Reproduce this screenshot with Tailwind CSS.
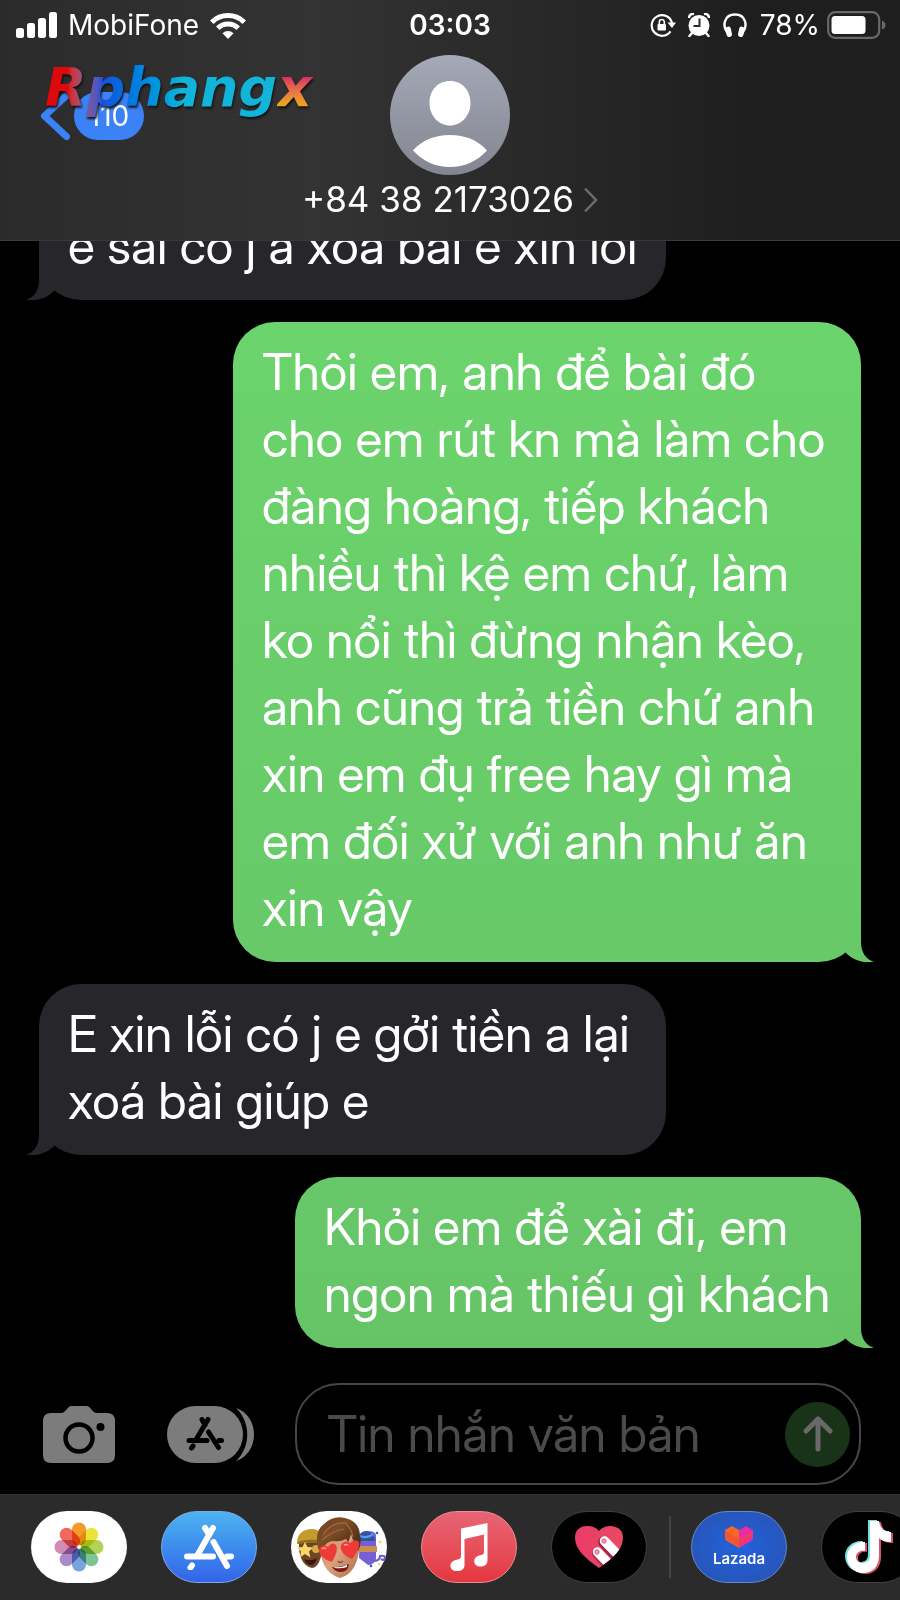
<!DOCTYPE html>
<html lang="vi">
<head>
<meta charset="utf-8">
<meta name="viewport" content="width=device-width, initial-scale=1">
<title>Tin nhắn</title>
<script src="https://cdn.jsdelivr.net/npm/@tailwindcss/browser@4"></script>
</head>
<body class="bg-black text-white font-['Inter','Noto_Sans',sans-serif] min-h-screen flex flex-col overflow-x-hidden">

<header class="relative z-10 bg-linear-to-r from-[#2b2b2c] via-[#333334] via-35% to-[#1e1e1e] to-85% border-b border-[#3a3a3b]">
  <!-- Status bar -->
  <div class="grid grid-cols-[1fr_auto_1fr] items-center h-[50px] px-[14px] text-[28px] leading-8">
    <div class="flex items-center gap-[11px] pl-[2px]">
      <svg class="w-[41px] h-[26px]" viewBox="0 0 41 26" fill="#fff" aria-label="Tín hiệu"><rect x="0" y="16" width="8" height="10" rx="2.5"/><rect x="11" y="11" width="8" height="15" rx="2.5"/><rect x="22" y="6" width="8" height="20" rx="2.5"/><rect x="33" y="0" width="8" height="26" rx="2.5"/></svg>
      <span>MobiFone</span>
      <svg class="w-9 h-[27px]" viewBox="0 0 36 27" fill="none" stroke="#fff" stroke-width="5" aria-label="Wi-Fi"><path d="M1.8 10.2a23 23 0 0 1 32.4 0"/><path d="M7.8 16.2a14.500 14.500 0 0 1 20.400 0"/><path d="M18 27l-5.500-5.700a8 8 0 0 1 11 0z" fill="#fff" stroke="none"/></svg>
    </div>
    <time class="font-semibold">03:03</time>
    <div class="flex items-center justify-end">
      <svg class="w-[26px] h-6 mr-3" viewBox="0 0 26 24" fill="none" stroke="#fff" stroke-width="2.200"><path d="M20.500 18.300A10.300 10.300 0 1 1 22 10"/><path d="M17.500 9.500h8.500l-4 5.500z" fill="#fff" stroke="none"/><rect x="7.500" y="11" width="8.500" height="6.500" rx="1" fill="#fff" stroke="none"/><path d="M9.300 11.500V9a2.500 2.500 0 0 1 5 0v2.500" stroke-width="1.600"/></svg>
      <svg class="w-[22px] h-6 mr-[13px]" viewBox="0 0 22 24"><circle cx="11" cy="12.500" r="10.500" fill="#fff"/><path d="M1 5a4 4 0 0 1 5-4M21 5a4 4 0 0 0-5-4" fill="none" stroke="#fff" stroke-width="2.500"/><path d="M4 20l-2.500 3M18 20l2.500 3" stroke="#fff" stroke-width="2.500" stroke-linecap="round"/><path d="M11.500 5.500v7.500H5.500" fill="none" stroke="#2b2b2b" stroke-width="2"/></svg>
      <svg class="w-6 h-6 mr-[13px]" viewBox="0 0 24 24"><path d="M4.500 20C-1 13 1 1.500 12 1.500S25 13 19.500 20" fill="none" stroke="#fff" stroke-width="2.400"/><rect x="3" y="13.500" width="5.500" height="10.500" rx="2.700" fill="#fff" transform="rotate(-12 6 19)"/><rect x="15.500" y="13.500" width="5.500" height="10.500" rx="2.700" fill="#fff" transform="rotate(12 18 19)"/></svg>
      <span class="mr-[7px]">78%</span>
      <svg class="w-[59px] h-7" viewBox="0 0 59 28"><rect x="1.200" y="1.200" width="51" height="25.600" rx="7" fill="none" stroke="#69696a" stroke-width="2.200"/><rect x="4.500" y="5" width="34" height="18" rx="3.500" fill="#fff"/><path d="M55 9.500q3.500 1.500 3.500 4.500t-3.500 4.500z" fill="#69696a"/></svg>
    </div>
  </div>
  <!-- Contact bar -->
  <div class="grid grid-cols-[1fr_auto_1fr] items-start pt-[5px] pb-[21px]">
    <button type="button" aria-label="Quay lại" class="flex items-center gap-[4px] pl-10 pt-9 w-fit">
      <svg class="w-[30px] h-[50px]" viewBox="0 0 30 50"><path d="M26.500 4.500L4.500 25l22 20.500" fill="none" stroke="#3b82f6" stroke-width="7" stroke-linecap="round" stroke-linejoin="round"/></svg>
      <span class="bg-[#3b82f6] rounded-full w-[70px] h-12 flex items-center justify-center text-[28px]">110</span>
    </button>
    <div class="flex flex-col items-center gap-[5px]">
      <svg class="w-[120px] h-[120px]" viewBox="0 0 120 120"><defs><linearGradient id="av" x1="0" y1="0" x2="0" y2="1"><stop offset="0" stop-color="#a5a9b8"/><stop offset="1" stop-color="#83868f"/></linearGradient></defs><circle cx="60" cy="60" r="60" fill="url(#av)"/><path d="M60 26c12 0 20.500 9 20.500 22S71 70.500 60 70.500 39.500 61 39.500 48 48 26 60 26zM23 95.500C32 85 45 80 60 80s28 5 37 15.500C87 106.500 74 112 60 112s-27-5.500-37-16.500z" fill="#fff"/></svg>
      <a href="tel:+84382173026" class="flex items-center gap-[10px] text-[35px] leading-[39px] whitespace-nowrap"><span>+84 38 2173026</span><svg class="w-[14px] h-[26px]" viewBox="0 0 14 26" fill="none" stroke="#6d6d6f" stroke-width="2.500"><path d="M1 1.500L12 13 1 24.500"/></svg></a>
    </div>
  </div>
  <!-- Watermark laid over the back button -->
  <div class="absolute left-[45px] top-[56px] font-['DejaVu_Sans',sans-serif] italic font-bold text-[54px] leading-[64px] drop-shadow-[1px_2px_1px_#111] flex pointer-events-none">
    <span class="bg-clip-text text-transparent bg-linear-to-r from-[#dc0a0c] from-10% via-[#1650de] via-25% to-[#12b5da] to-60%">Rphang</span><span class="bg-clip-text text-transparent bg-linear-to-b from-[#d81b60] from-30% to-[#eda315] to-75% pr-1">x</span>
  </div>
</header>

<main class="flex-1 flex flex-col gap-[22px] overflow-hidden px-[39px] font-['Inter_Display','Inter',sans-serif] text-[50px] leading-[67px] whitespace-nowrap">
  <div class="relative self-start -mt-[45px] bg-[#27262b] rounded-[42px] px-[29px] pt-[17px] pb-[20px] w-[627px]">
    <p>e sai có j a xoá bài e xin lỗi</p>
    <svg class="absolute -left-[13px] bottom-0 w-[54px] h-[44px]" viewBox="0 0 54 44" fill="#27262b"><path d="M13 0V24C13 34 8 42 0 43.500 10 46 21 42 28 35L54 12z"/></svg>
  </div>
  <div class="relative self-end bg-linear-to-b from-[#6cd46c] to-[#67c968] rounded-[42px] px-[29px] pt-[17px] pb-[20px] w-[628px]">
    <p>Thôi em, anh để bài đó<br>cho em rút kn mà làm cho<br>đàng hoàng, tiếp khách<br>nhiều thì kệ em chứ, làm<br>ko nổi thì đừng nhận kèo,<br>anh cũng trả tiền chứ anh<br>xin em đụ free hay gì mà<br>em đối xử với anh như ăn<br>xin vậy</p>
    <svg class="absolute -right-[13px] bottom-0 w-[54px] h-[44px]" viewBox="0 0 54 44" fill="#67c968"><path d="M41 0V24C41 34 46 42 54 43.500 44 46 33 42 26 35L0 12z"/></svg>
  </div>
  <div class="relative self-start bg-[#27262b] rounded-[42px] px-[29px] pt-[17px] pb-[20px] w-[627px]">
    <p>E xin lỗi có j e gởi tiền a lại<br>xoá bài giúp e</p>
    <svg class="absolute -left-[13px] bottom-0 w-[54px] h-[44px]" viewBox="0 0 54 44" fill="#27262b"><path d="M13 0V24C13 34 8 42 0 43.500 10 46 21 42 28 35L54 12z"/></svg>
  </div>
  <div class="relative self-end bg-linear-to-b from-[#68c869] to-[#66c467] rounded-[42px] px-[29px] pt-[17px] pb-[20px] w-[566px]">
    <p>Khỏi em để xài đi, em<br>ngon mà thiếu gì khách</p>
    <svg class="absolute -right-[13px] bottom-0 w-[54px] h-[44px]" viewBox="0 0 54 44" fill="#66c467"><path d="M41 0V24C41 34 46 42 54 43.500 44 46 33 42 26 35L0 12z"/></svg>
  </div>
</main>

<!-- Composer -->
<form class="flex items-center pl-[43px] pr-[39px] pb-[9px]">
  <button type="button" aria-label="Máy ảnh" class="mr-[52px]">
    <svg class="w-[72px] h-[57px]" viewBox="0 0 72 57"><path d="M8 7h10c3 0 4-2 6-4 2-2.500 3-3 6-3h12c3 0 4 .5 6 3 2 2 3 4 6 4h10q8 0 8 8v34q0 8-8 8H8q-8 0-8-8V15q0-8 8-8z" fill="#7c7c7c"/><circle cx="36" cy="32" r="13.500" fill="none" stroke="#000" stroke-width="4.500"/><circle cx="57.500" cy="21" r="4" fill="#000"/></svg>
  </button>
  <button type="button" aria-label="Ứng dụng" class="mr-[40px]">
    <svg class="w-[88px] h-[57px]" viewBox="0 0 88 57"><rect width="76" height="57" rx="28.500" fill="#7c7c7c"/><path d="M69 2c24 8 24 45 0 53 15-14 15-39 0-53z" fill="#7c7c7c"/><g stroke="#000" stroke-width="5" stroke-linecap="round" fill="none"><path d="M35 13.500L38 19M41 13.500L28.500 34.500M22 34.500H40M26 40l-1.500 2M52 34.500h2.500"/><path d="M41.500 26L51.500 41.500"/></g></svg>
  </button>
  <div class="flex-1 min-w-0 flex items-center h-[102px] border-2 border-[#464648] rounded-[44px] pl-[30px] pr-[9px] font-['Inter_Display','Inter',sans-serif]">
    <input type="text" aria-label="Tin nhắn văn bản" placeholder="Tin nhắn văn bản" class="flex-1 min-w-0 bg-transparent outline-none text-[50px] leading-[67px] placeholder:text-[#4b4b4e]">
    <button type="submit" aria-label="Gửi" class="rounded-full bg-[#193319] w-[65px] h-[65px] flex items-center justify-center">
      <svg class="w-[30px] h-9" viewBox="0 0 30 36" fill="none" stroke="#696969" stroke-width="5" stroke-linecap="round" stroke-linejoin="round"><path d="M15 33V3M3 15L15 3l12 12"/></svg>
    </button>
  </div>
</form>

<!-- App drawer -->
<nav class="bg-[#2b2b2b] border-t border-[#333] h-[106px] flex items-center gap-[34px] pl-[31px] pb-[1px] overflow-hidden" aria-label="Ứng dụng iMessage">
  <button type="button" aria-label="Ảnh" class="shrink-0 w-24 h-[72px] rounded-full bg-white flex items-center justify-center">
    <svg class="w-[50px] h-[50px]" viewBox="-25 -25 50 50"><g class="mix-blend-multiply">
      <rect x="-7" y="-24.500" width="14" height="23" rx="7" fill="#f39a2d" class="mix-blend-multiply"/>
      <rect x="-7" y="-24.500" width="14" height="23" rx="7" fill="#ece43a" transform="rotate(45)" class="mix-blend-multiply"/>
      <rect x="-7" y="-24.500" width="14" height="23" rx="7" fill="#b3d355" transform="rotate(90)" class="mix-blend-multiply"/>
      <rect x="-7" y="-24.500" width="14" height="23" rx="7" fill="#7dc393" transform="rotate(135)" class="mix-blend-multiply"/>
      <rect x="-7" y="-24.500" width="14" height="23" rx="7" fill="#76a5db" transform="rotate(180)" class="mix-blend-multiply"/>
      <rect x="-7" y="-24.500" width="14" height="23" rx="7" fill="#a78cc8" transform="rotate(225)" class="mix-blend-multiply"/>
      <rect x="-7" y="-24.500" width="14" height="23" rx="7" fill="#d28bb5" transform="rotate(270)" class="mix-blend-multiply"/>
      <rect x="-7" y="-24.500" width="14" height="23" rx="7" fill="#ee6a5c" transform="rotate(315)" class="mix-blend-multiply"/></g><circle r="1.800" fill="#fff"/></svg>
  </button>
  <button type="button" aria-label="App Store" class="shrink-0 w-24 h-[72px] rounded-full bg-linear-to-b from-[#4eb2f0] to-[#3463e8] border border-[#7fa8ee] flex items-center justify-center">
    <svg class="w-[50px] h-[46px]" viewBox="0 0 50 46" fill="none" stroke="#fff" stroke-width="6" stroke-linecap="round"><path d="M21 4l4 6M29 4L13.500 31M3 32.500h26M8 41.500l-1.500 2M43 32.500h4M29.500 18L43 42"/></svg>
  </button>
  <button type="button" aria-label="Memoji" class="shrink-0 w-24 h-[72px] rounded-full bg-white flex items-center justify-center">
    <svg class="w-24 h-[72px]" viewBox="0 0 96 72"><defs><linearGradient id="sk" x1="0" y1="0" x2="1" y2="1"><stop offset="0" stop-color="#c98f68"/><stop offset=".5" stop-color="#dba27c"/><stop offset="1" stop-color="#a86b48"/></linearGradient><linearGradient id="hr" x1="0" y1="0" x2="1" y2="1"><stop offset="0" stop-color="#6f421f"/><stop offset=".4" stop-color="#7d4c28"/><stop offset="1" stop-color="#3a1f10"/></linearGradient></defs>
      <path d="M8 30q-1 24 13 27 9-1 11-24V26z" fill="#6d4428"/><path d="M6 32C6 23 12 18 21 18q11 0 11 14-12-2-26 1z" fill="#c49a2c"/><path d="M7 32q12-4 25-1" stroke="#8c6a18" stroke-width="2" fill="none"/><path d="M14 31l2.500 5 6 .5-4.500 4 1.500 6-5.500-3.500-5 3.500 1-6-4-4 5.500-.5z" fill="#f6d768"/><circle cx="25" cy="38" r="4" fill="#d8ab3a"/><path d="M13 48q7 3 13-1-2 7-6 7t-7-6z" fill="#3a1410"/>
      <path d="M69 24q1-4 8-4t8 4v24q-2 6-8 6l-9-7z" fill="#7561d3"/><path d="M67 30q0-9 8-10 8 1 9 10z" fill="#394e9f"/><path d="M69 25q8 3 13-2" stroke="#4aa5e2" stroke-width="2" fill="none"/><path d="M68 35h18v6H68z" fill="#c98d55"/><path d="M82 50q7 0 7-5 5-1 5 2-1 3-4 1" fill="none" stroke="#725dd2" stroke-width="2.200"/><circle cx="86" cy="22" r="1.300" fill="#3857c8"/><circle cx="89" cy="31" r="1.300" fill="#e6d83a"/><circle cx="80" cy="55" r="1.300" fill="#3857c8"/><circle cx="88" cy="53" r="1" fill="#e6c63a"/>
      <path d="M29 30q-1 31 20 37 19-5 20-37l-8-16H36z" fill="url(#sk)"/><path d="M28 40Q22 21 33 13 42 4 54 7q14 3 15 17 2 9-2 16l-3-8q-3-4-4-9-2 7-3 8l-2-3q-6 3-12 2-10 0-12 12z" fill="url(#hr)"/><path d="M32 24Q40 11 55 12M31 29q10-9 22-11M54 12q6 4 8 14" stroke="#a26b3e" stroke-width="1.200" fill="none"/>
      <g fill="#ee3b37"><path d="M41 51C33 49 27 43 28 38q3-6 9-2 4-6 8-2 3 5-4 17z"/><path d="M61 48C54 46 48 39 50 34q4-6 9-2 5-5 9-1 2 6-7 17z"/></g><path d="M31 38q2-2 4 0M53 34q2-1 4 0" stroke="#ff9c93" stroke-width="1.500" fill="none"/><path d="M47 50q2 3 5 0" stroke="#8b5134" stroke-width="1.500" fill="none"/><path d="M41 56q9 1 17-3-1 8-8 8-6 0-9-5z" fill="#7a1c1c"/><path d="M43 56q7 1 13-2v2q-6 2-12 1z" fill="#fff"/></svg>
  </button>
  <button type="button" aria-label="Âm nhạc" class="shrink-0 w-24 h-[72px] rounded-full bg-linear-to-b from-[#e76474] to-[#e5363f] border border-[#ee8d92] flex items-center justify-center">
    <svg class="w-[38px] h-12" viewBox="0 0 38 48" fill="#fff"><path d="M11 5.500L37.500 0v37c0 5-3.500 6.500-7.500 6.500-7 0-8-9-1-11 4-1 5-1 5-4V11.500L14.500 16v26c0 4-3 6-7.500 6-8 0-9-9-1.500-11 4-1 5.500-1 5.500-4z"/></svg>
  </button>
  <button type="button" aria-label="Digital Touch" class="shrink-0 w-24 h-[72px] rounded-full bg-black border border-[#404040] flex items-center justify-center">
    <svg class="w-12 h-11" viewBox="0 0 48 44"><defs><linearGradient id="dt" x1="0" x2="1"><stop offset="0" stop-color="#ea3b69"/><stop offset="1" stop-color="#e84a61"/></linearGradient><clipPath id="hc"><path d="M24 43C10 33 0 24 0 13 0 4 6 1 12 1q8 0 12 5Q28 1 36 1q12 1 12 12c0 11-10 20-24 30z"/></clipPath></defs><g clip-path="url(#hc)"><path fill="url(#dt)" d="M0 0h48v44H0z"/><g stroke-linecap="round"><path d="M28.500 17L44 34M22.500 28L38 45" stroke="#a52747" stroke-width="11"/><path d="M29.500 16L46 33M22.500 27L39 44" stroke="#fff" stroke-width="9.500"/></g><circle cx="29" cy="16" r="2.200" fill="#ef9db3" stroke="#d9688c"/><circle cx="22" cy="27" r="2.200" fill="#ef9db3" stroke="#d9688c"/></g></svg>
  </button>
  <div class="flex items-center gap-5 -ml-[12px] shrink-0">
    <span class="w-[2px] h-[62px] bg-[#444]"></span>
    <button type="button" aria-label="Lazada" class="w-24 h-[72px] rounded-full bg-radial from-[#1f63dc] to-[#2951b0] border border-[#6388cb] flex flex-col items-center justify-center gap-[2px]">
      <svg class="w-7 h-[22px]" viewBox="0 0 28 22"><path d="M0 4L7 0l7 4v18L2 15Q0 14 0 12z" fill="#f36b24"/><path d="M28 4l-7-4-7 4v18l12-7q2-1 2-3z" fill="#e62cab"/><path d="M0 5l14 7 14-7v5L14 22 0 12z" fill="#f4453f" fill-opacity=".6"/></svg>
      <span class="text-[15px] leading-[18px] font-semibold">Lazada</span>
    </button>
  </div>
  <button type="button" aria-label="TikTok" class="shrink-0 w-24 h-[72px] rounded-full bg-black border border-[#404040] flex items-center justify-center">
    <svg class="w-12 h-[54px]" viewBox="0 0 48 54"><defs><path id="tk" d="M23 0h9c1 7 5 11 12 11v10c-5 0-9-1-12-4v18c0 11-7 17-16 17C7 52 0 45 0 36c0-9 8-16 18-15v9c-5-1-9 2-9 6 0 3 3 6 6 6 5 0 8-2 8-8z"/></defs><use href="#tk" fill="#6fe0df"/><use href="#tk" x="4" y="2" fill="#d9536b"/><use href="#tk" x="2" y="1" fill="#fff"/></svg>
  </button>
</nav>
</body>
</html>
